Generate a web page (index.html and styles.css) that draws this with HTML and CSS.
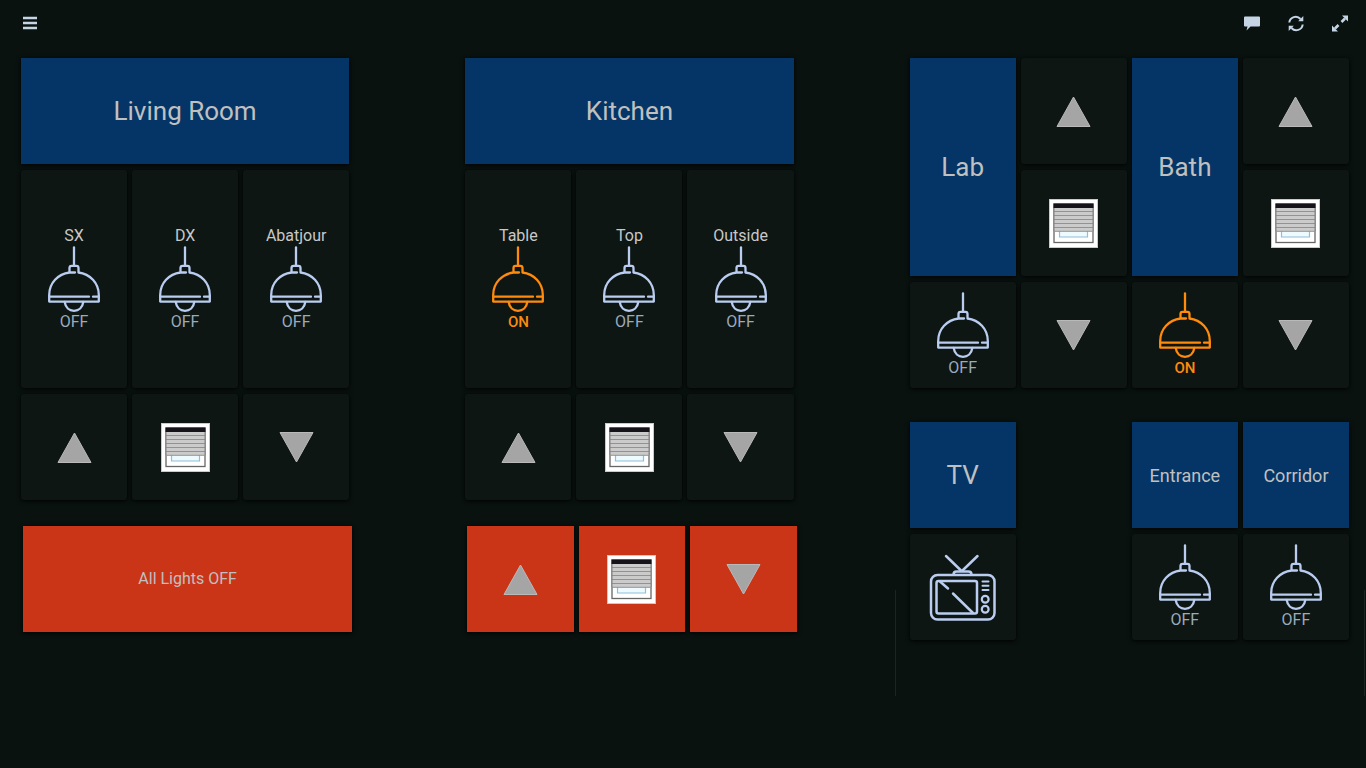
FILE: index.html
```html
<!DOCTYPE html>
<html lang="en">
<head>
<meta charset="utf-8">
<meta name="viewport" content="width=device-width, initial-scale=1">
<title>Home</title>
<link rel="stylesheet" href="styles.css">
</head>
<body>
<svg class="symbols" aria-hidden="true">
  <symbol id="lamp" viewBox="-27 0 54 66">
    <g fill="none" stroke="currentColor" stroke-width="2.300" stroke-linecap="round" stroke-linejoin="round">
      <path d="M0 1.5V19"/>
      <path d="M-4.5 26V22Q-4.5 19.8-2.5 19.8H2.5Q4.500 19.8 4.500 22V26.500C16 28 24.800 37 24.800 49V55.600H-24.800V49C-24.800 37-16 28-4.500 26.500H1"/>
      <path d="M-24.500 50.700H15M19 50.700H24.500"/>
      <path d="M-9.300 56C-8.500 61.500-4.800 64.800 0 64.800S8.500 61.500 9.300 56"/>
    </g>
  </symbol>
  <symbol id="shutter" viewBox="0 0 49 49">
    <rect width="49" height="49" fill="#c9c9cf"/>
    <rect x="1" y="1" width="47" height="47" fill="#fff"/>
    <rect x="5" y="5" width="39" height="38.500" fill="#fff" stroke="#666" stroke-width="1.300"/>
    <path d="M10.500 31V38H38.500V31" fill="#effaff" stroke="#8cc0dc" stroke-width="1.200"/>
    <rect x="5" y="8" width="39" height="24" fill="#cbcbcb"/>
    <path d="M5 12.500H44M5 16.500H44M5 20.500H44M5 24.500H44M5 28.500H44M5 32.300H44" stroke="#929292"/>
    <path d="M5 8V32M44 8V32" stroke="#808080"/>
    <rect x="4.500" y="4.500" width="40" height="4.500" fill="#17131b"/>
  </symbol>
  <symbol id="up" viewBox="0 0 35 31">
    <path d="M17.500 1L34 30.500H1Z" fill="#a5a5a5" stroke="#b9b9b9"/>
  </symbol>
  <symbol id="down" viewBox="0 0 35 31">
    <path d="M17.500 30L34 .5H1Z" fill="#a5a5a5" stroke="#b9b9b9"/>
  </symbol>
  <symbol id="tv" viewBox="0 0 67 68">
    <g fill="none" stroke="currentColor" stroke-width="2.500" stroke-linecap="round" stroke-linejoin="round">
      <rect x="2" y="22" width="63.500" height="44.500" rx="6.500"/>
      <rect x="7.500" y="28" width="40.500" height="32.500" rx="2"/>
      <path d="M11 28.500L19 35.500M24 40.500L44 60"/>
      <path d="M53.500 28.500H59.500M53.500 32.700H59.500M53.500 36.900H59.500" stroke-width="2"/>
      <circle cx="56.200" cy="46.200" r="3.400" stroke-width="2.200"/>
      <circle cx="56.200" cy="56.200" r="3.400" stroke-width="2.200"/>
      <path d="M24.500 21.500Q24.500 18.500 27.500 18.500H39.500Q42.500 18.500 42.500 21.500"/>
      <path d="M17 3L32 17.500M48.500 3L33.500 17.500"/>
    </g>
  </symbol>
</svg>

<header class="toolbar">
  <button class="tool" type="button" aria-label="Menu">
    <svg width="18" height="18" viewBox="0 0 18 18"><path d="M2 3H16M2 8H16M2 13H16" stroke="currentColor" stroke-width="2.600"/></svg>
  </button>
  <div class="actions">
    <button class="tool" type="button" aria-label="Messages">
      <svg width="18" height="18" viewBox="0 0 18 18"><path d="M2 1.500H16Q17 1.500 17 2.500V10.500Q17 11.500 16 11.500H7.500L3.500 15.500L4.500 11.500H2Q1 11.500 1 10.500V2.500Q1 1.500 2 1.500Z" fill="currentColor"/></svg>
    </button>
    <button class="tool" type="button" aria-label="Refresh">
      <svg width="18" height="18" viewBox="0 0 18 18"><path d="M2.300 7.500A6.400 6.400 0 0 1 13.500 4M15.700 9.500A6.400 6.400 0 0 1 4.500 13" fill="none" stroke="currentColor" stroke-width="2"/><path d="M16.300 1V6.200H11.200ZM1.700 16V10.800H6.800Z" fill="currentColor"/></svg>
    </button>
    <button class="tool" type="button" aria-label="Full screen">
      <svg width="18" height="18" viewBox="0 0 18 18"><path d="M10.500 7L14 3.500M7.500 10L4 13.500" stroke="currentColor" stroke-width="2.600"/><path d="M17 .500V6.500L11 .500ZM1 16.500V10.500L7 16.500Z" fill="currentColor"/></svg>
    </button>
  </div>
</header>

<main class="dashboard">
  <div class="zone">
    <section class="panel">
      <h2 class="title wide">Living Room</h2>
      <button class="tile tall" type="button"><span class="name">SX</span><svg class="lamp"><use href="#lamp"/></svg><span class="state">OFF</span></button>
      <button class="tile tall" type="button"><span class="name">DX</span><svg class="lamp"><use href="#lamp"/></svg><span class="state">OFF</span></button>
      <button class="tile tall" type="button"><span class="name">Abatjour</span><svg class="lamp"><use href="#lamp"/></svg><span class="state">OFF</span></button>
      <button class="tile" type="button" aria-label="Shutter up"><svg class="arrow"><use href="#up"/></svg></button>
      <button class="tile" type="button" aria-label="Shutter"><svg class="shutter"><use href="#shutter"/></svg></button>
      <button class="tile" type="button" aria-label="Shutter down"><svg class="arrow"><use href="#down"/></svg></button>
    </section>
    <section class="panel global">
      <button class="tile alert wide" type="button">All Lights OFF</button>
    </section>
  </div>

  <div class="zone second">
    <section class="panel">
      <h2 class="title wide">Kitchen</h2>
      <button class="tile tall on" type="button"><span class="name">Table</span><svg class="lamp"><use href="#lamp"/></svg><span class="state">ON</span></button>
      <button class="tile tall" type="button"><span class="name">Top</span><svg class="lamp"><use href="#lamp"/></svg><span class="state">OFF</span></button>
      <button class="tile tall" type="button"><span class="name">Outside</span><svg class="lamp"><use href="#lamp"/></svg><span class="state">OFF</span></button>
      <button class="tile" type="button" aria-label="Shutter up"><svg class="arrow"><use href="#up"/></svg></button>
      <button class="tile" type="button" aria-label="Shutter"><svg class="shutter"><use href="#shutter"/></svg></button>
      <button class="tile" type="button" aria-label="Shutter down"><svg class="arrow"><use href="#down"/></svg></button>
    </section>
    <section class="panel global">
      <button class="tile alert" type="button" aria-label="All shutters up"><svg class="arrow"><use href="#up"/></svg></button>
      <button class="tile alert" type="button" aria-label="All shutters"><svg class="shutter"><use href="#shutter"/></svg></button>
      <button class="tile alert" type="button" aria-label="All shutters down"><svg class="arrow"><use href="#down"/></svg></button>
    </section>
  </div>

  <div class="zone third">
    <section class="panel four">
      <h2 class="title tall">Lab</h2>
      <button class="tile" type="button" aria-label="Lab shutter up"><svg class="arrow"><use href="#up"/></svg></button>
      <h2 class="title tall">Bath</h2>
      <button class="tile" type="button" aria-label="Bath shutter up"><svg class="arrow"><use href="#up"/></svg></button>
      <button class="tile" type="button" aria-label="Lab shutter"><svg class="shutter"><use href="#shutter"/></svg></button>
      <button class="tile" type="button" aria-label="Bath shutter"><svg class="shutter"><use href="#shutter"/></svg></button>
      <button class="tile" type="button"><svg class="lamp"><use href="#lamp"/></svg><span class="state">OFF</span></button>
      <button class="tile" type="button" aria-label="Lab shutter down"><svg class="arrow"><use href="#down"/></svg></button>
      <button class="tile on" type="button"><svg class="lamp"><use href="#lamp"/></svg><span class="state">ON</span></button>
      <button class="tile" type="button" aria-label="Bath shutter down"><svg class="arrow"><use href="#down"/></svg></button>
    </section>
    <section class="panel four lower">
      <h2 class="title">TV</h2>
      <h2 class="title small skip">Entrance</h2>
      <h2 class="title small">Corridor</h2>
      <button class="tile" type="button" aria-label="TV"><svg class="tv"><use href="#tv"/></svg></button>
      <button class="tile skip" type="button"><svg class="lamp"><use href="#lamp"/></svg><span class="state">OFF</span></button>
      <button class="tile" type="button"><svg class="lamp"><use href="#lamp"/></svg><span class="state">OFF</span></button>
    </section>
  </div>
</main>
</body>
</html>
```
FILE: styles.css
```css
* {
  box-sizing: border-box;
}

body {
  margin: 0;
  min-height: 100vh;
  background: #09120f;
  color: #c0c0c0;
  font-family: Roboto, "Liberation Sans", sans-serif;
}

button {
  border: 0;
  padding: 0;
  font: inherit;
  cursor: pointer;
}

.symbols {
  display: none;
}

.toolbar {
  display: flex;
  justify-content: space-between;
  padding: 0 4px 0 8px;
}

.actions {
  display: flex;
}

.tool {
  display: grid;
  place-items: center;
  width: 44px;
  height: 48px;
  background: none;
  color: #c5d5e6;
}

/* Twelve equal columns; each zone spans three or four of them. */
.dashboard {
  display: grid;
  grid-template-columns: repeat(12, minmax(0, 1fr));
  column-gap: 5px;
  padding: 10px 17px 24px 21px;
}

.zone {
  grid-column: 1 / span 3;
}

.second {
  grid-column: 5 / span 3;
}

.third {
  grid-column: 9 / span 4;
}

.panel {
  display: grid;
  grid-template-columns: repeat(3, minmax(0, 1fr));
  grid-auto-rows: 106px;
  gap: 6px 5px;
}

.four {
  grid-template-columns: repeat(4, minmax(0, 1fr));
}

.global {
  margin: 26px -3px 0 2px;
}

.lower {
  position: relative;
  margin-top: 34px;
}

/* Faint edges of the empty widget under the lower panel. */
.lower::after {
  content: "";
  position: absolute;
  top: 168px;
  left: -15px;
  right: -16px;
  height: 106px;
  border: solid #1b2421;
  border-width: 0 1px;
  pointer-events: none;
}

.title,
.tile {
  display: flex;
  flex-direction: column;
  align-items: center;
  justify-content: center;
  box-shadow: 0 1px 4px #000;
}

.title {
  margin: 0;
  background: #043566;
  color: #c0c0c0;
  font-size: 26px;
  font-weight: 400;
}

.title.small {
  font-size: 18px;
}

.tile {
  border-radius: 3px;
  background: #0d1613;
  color: #bacdf0;
  font-size: 16px;
  line-height: 20px;
}

.alert {
  border-radius: 0;
  background: #ca3517;
  color: #c0c0c0;
}

.wide {
  grid-column: 1 / -1;
}

.tall {
  grid-row: span 2;
}

.skip {
  grid-column: 3;
}

.name {
  color: #c8c8c8;
}

.state {
  color: #9baabd;
}

.on,
.on .state {
  color: #ff8a0c;
}

.on .state {
  font-size: 15px;
  font-weight: 500;
}

.lamp {
  width: 54px;
  height: 66px;
}

.shutter {
  width: 49px;
  height: 49px;
}

.arrow {
  width: 35px;
  height: 31px;
}

.tv {
  width: 67px;
  height: 68px;
}
```
